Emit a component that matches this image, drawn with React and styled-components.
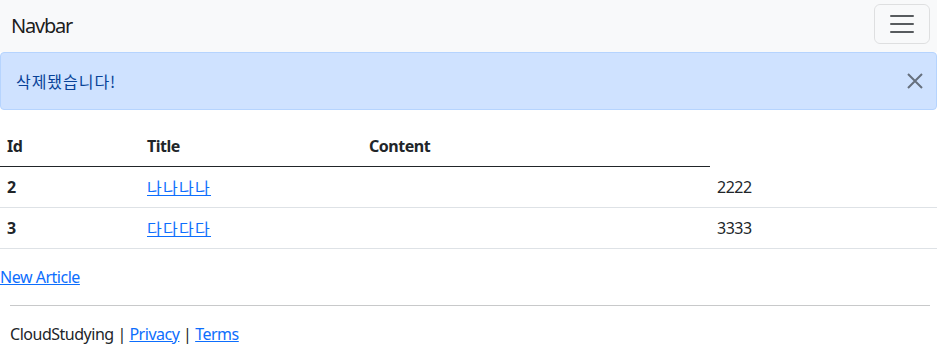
import styled, { createGlobalStyle } from "styled-components";

const GlobalStyle = createGlobalStyle`
* { box-sizing: border-box; }
body {
  margin: 0;
  font-family: "Noto Sans", "Noto Sans CJK KR", sans-serif;
  font-size: 16px;
  line-height: 24px;
  letter-spacing: -0.03em;
  color: #212529;
  background: #fff;
}
`

const Navbar = styled.nav`
display: flex;
align-items: center;
justify-content: space-between;
height: 52px;
padding: 0 7px 4px 11px;
background-color: #f8f9fa;
`

const Brand = styled.a`
margin-top: 4px;
font-size: 20px;
line-height: 30px;
letter-spacing: -0.06em;
color: rgba(0, 0, 0, 0.9);
text-decoration: none;
`

const Toggler = styled.button`
display: flex;
align-items: center;
justify-content: center;
width: 56px;
height: 40px;
padding: 0;
background: transparent;
border: 1px solid rgba(0, 0, 0, 0.1);
border-radius: 6px;
`

const Alert = styled.div`
position: relative;
display: flex;
align-items: center;
height: 58px;
padding: 0 48px 0 15px;
margin-bottom: 16px;
color: #084298;
background-color: #cfe2ff;
border: 1px solid #b6d4fe;
border-radius: 4px;
font-family: "Noto Sans CJK KR", "Noto Sans", sans-serif;
letter-spacing: 0.06em;
`

const CloseButton = styled.button`
position: absolute;
top: 0;
right: 0;
width: 42px;
height: 56px;
padding: 0;
display: flex;
align-items: center;
justify-content: center;
background: transparent;
border: none;
opacity: 0.5;
`

const Table = styled.table`
width: 100%;
border-collapse: collapse;
margin-bottom: 16px;
`

const HeadCell = styled.th`
width: ${p => p.$w}px;
padding: 8px 7px;
text-align: left;
font-weight: 700;
border-bottom: 1px solid #212529;
`

const Row = styled.tr`
border-bottom: 1px solid #dee2e6;
`

const Cell = styled.td`
padding: 8px 7px;
line-height: 24px;
font-weight: ${p => (p.$bold ? 700 : 400)};
`

const Link = styled.a`
color: #0d6efd;
text-decoration: underline;
`

const KoLink = styled(Link)`
display: inline-block;
vertical-align: top;
font-family: "Noto Sans CJK KR", "Noto Sans", sans-serif;
letter-spacing: 0.08em;
`

const Footer = styled.footer`
padding: 0 7px 0 10px;
`

const Rule = styled.hr`
margin: 16px 0;
border: 0;
border-top: 1px solid #c8c9ca;
`

const rows = [
  { id: 2, title: "나나나나", content: "", extra: "2222" },
  { id: 3, title: "다다다다", content: "", extra: "3333" },
];

export default function App() {
  return (
    <>
      <GlobalStyle />
      <Navbar>
        <Brand href="#">Navbar</Brand>
        <Toggler aria-label="Toggle navigation">
          <svg width="30" height="30" viewBox="0 0 30 30">
            <path stroke="rgba(33,37,41,0.75)" strokeLinecap="round" strokeMiterlimit="10" strokeWidth="2" d="M4 7h22M4 15h22M4 23h22" />
          </svg>
        </Toggler>
      </Navbar>
      <Alert>
        삭제됐습니다!
        <CloseButton aria-label="Close">
          <svg width="16" height="16" viewBox="0 0 16 16">
            <path d="M1 1l14 14M15 1L1 15" stroke="#000" strokeWidth="2" />
          </svg>
        </CloseButton>
      </Alert>
      <Table>
        <thead>
          <tr>
            <HeadCell $w={140}>Id</HeadCell>
            <HeadCell $w={222}>Title</HeadCell>
            <HeadCell $w={348}>Content</HeadCell>
          </tr>
        </thead>
        <tbody>
          {rows.map(r => (
            <Row key={r.id}>
              <Cell $bold>{r.id}</Cell>
              <Cell><KoLink href="#">{r.title}</KoLink></Cell>
              <Cell>{r.content}</Cell>
              <Cell>{r.extra}</Cell>
            </Row>
          ))}
        </tbody>
      </Table>
      <Link href="#">New Article</Link>
      <Footer>
        <Rule />
        CloudStudying | <Link href="#">Privacy</Link> | <Link href="#">Terms</Link>
      </Footer>
    </>
  );
}
